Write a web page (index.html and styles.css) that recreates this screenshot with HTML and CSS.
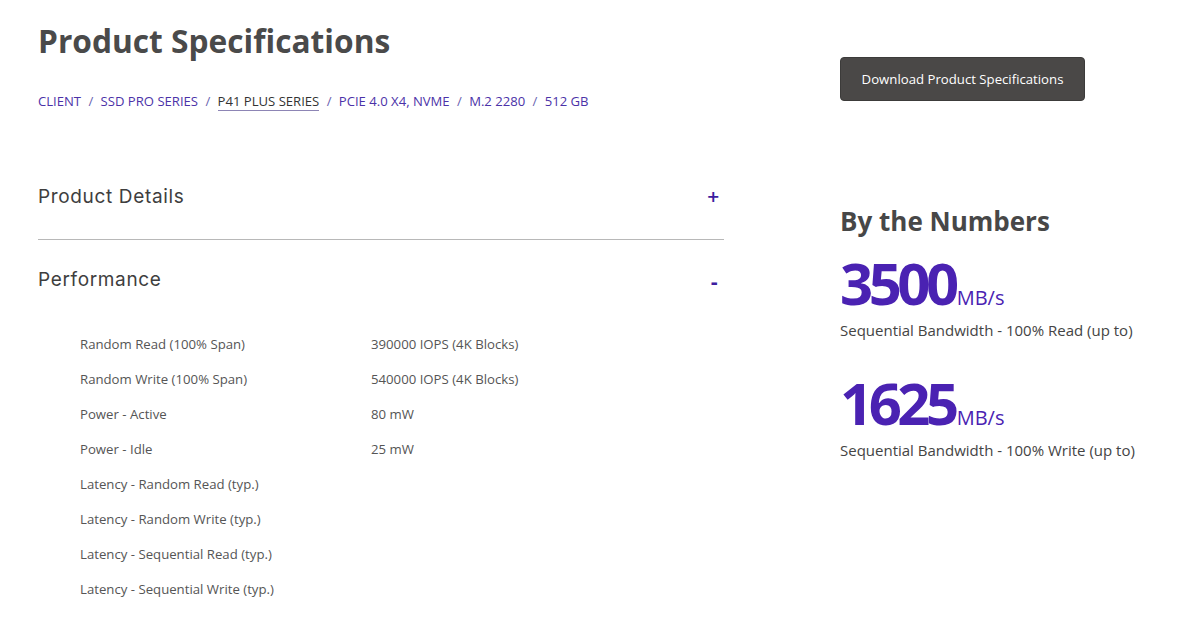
FILE: index.html
```html
<!DOCTYPE html>
<html lang="en">
<head>
<meta charset="utf-8">
<title>Product Specifications</title>
<link rel="stylesheet" href="styles.css">
</head>
<body>
<div class="page">
  <main class="main">
    <h1 class="title">Product Specifications</h1>
    <nav class="crumbs">
      <a class="crumb">CLIENT</a><span class="sep">/</span><a class="crumb">SSD PRO SERIES</a><span class="sep">/</span><a class="crumb active">P41 PLUS SERIES</a><span class="sep">/</span><a class="crumb">PCIE 4.0 X4, NVME</a><span class="sep">/</span><a class="crumb">M.2 2280</a><span class="sep">/</span><a class="crumb">512 GB</a>
    </nav>
    <section class="accordion">
      <div class="acc-item closed">
        <div class="acc-head"><span class="acc-title">Product Details</span><span class="acc-icon">+</span></div>
      </div>
      <div class="acc-item open">
        <div class="acc-head"><span class="acc-title">Performance</span><span class="acc-icon minus">-</span></div>
        <div class="spec-list">
          <div class="spec-row"><span class="spec-label">Random Read (100% Span)</span><span class="spec-value">390000 IOPS (4K Blocks)</span></div>
          <div class="spec-row"><span class="spec-label">Random Write (100% Span)</span><span class="spec-value">540000 IOPS (4K Blocks)</span></div>
          <div class="spec-row"><span class="spec-label">Power - Active</span><span class="spec-value">80 mW</span></div>
          <div class="spec-row"><span class="spec-label">Power - Idle</span><span class="spec-value">25 mW</span></div>
          <div class="spec-row"><span class="spec-label">Latency - Random Read (typ.)</span><span class="spec-value"></span></div>
          <div class="spec-row"><span class="spec-label">Latency - Random Write (typ.)</span><span class="spec-value"></span></div>
          <div class="spec-row"><span class="spec-label">Latency - Sequential Read (typ.)</span><span class="spec-value"></span></div>
          <div class="spec-row"><span class="spec-label">Latency - Sequential Write (typ.)</span><span class="spec-value"></span></div>
        </div>
      </div>
    </section>
  </main>
  <aside class="side">
    <button class="download">Download Product Specifications</button>
    <h2 class="numbers-title">By the Numbers</h2>
    <div class="stat">
      <div class="stat-line"><span class="stat-num">3500</span><span class="stat-unit">MB/s</span></div>
      <div class="stat-caption">Sequential Bandwidth - 100% Read (up to)</div>
    </div>
    <div class="stat second">
      <div class="stat-line"><span class="stat-num">1625</span><span class="stat-unit">MB/s</span></div>
      <div class="stat-caption">Sequential Bandwidth - 100% Write (up to)</div>
    </div>
  </aside>
</div>
</body>
</html>
```
FILE: styles.css
```css
* { box-sizing: border-box; }
html, body { margin: 0; padding: 0; background: #fff; }
body { font-family: "Open Sans", "Liberation Sans", sans-serif; color: #444; }

.page {
  display: flex;
  gap: 116px;
  padding: 21px 0 0 38px;
}
.main { width: 686px; flex: none; }
.side { padding-top: 36px; width: 320px; flex: none; }

.title {
  margin: 0;
  font-size: 31.7px;
  line-height: 40px;
  font-weight: 700;
  color: #4a4a4a;
}

.crumbs {
  margin-top: 31px;
  font-size: 13.1px;
  line-height: 18px;
  color: #4b32a8;
}
.crumb { color: #4b32a8; text-decoration: none; }
.crumb.active { color: #333; border-bottom: 1px solid #8d85b5; }
.sep { margin: 0 7.35px; color: #6a5fb0; }

.accordion { margin-top: 45px; }
.acc-head {
  display: flex;
  justify-content: space-between;
  align-items: center;
  padding: 30px 4px 30px 0;
  line-height: 24px;
}
.closed { border-bottom: 1px solid #b8b8b8; }
.open .acc-head { padding-top: 28px; padding-bottom: 30px; }
.acc-title {
  font-family: "Inter", "Lato", sans-serif;
  font-size: 19px;
  letter-spacing: 0.65px;
  color: #3e3e3e;
}
.acc-icon {
  font-family: "DejaVu Sans", sans-serif;
  font-weight: 700;
  font-size: 16px;
  color: #3d1ea0;
}
.acc-icon.minus {
  font-size: 18px;
  line-height: 18px;
  margin-top: 6px;
  padding-right: 2px;
}

.spec-list { padding: 4px 0 0 42px; }
.spec-row {
  display: grid;
  grid-template-columns: 291px auto;
  height: 35px;
  align-items: center;
  font-size: 13.2px;
  color: #555;
}

.download {
  display: block;
  width: 245px;
  height: 44px;
  background: #4a4847;
  border: 1px solid #3c3b3a;
  border-radius: 4px;
  color: #fff;
  font-family: "Open Sans", "Liberation Sans", sans-serif;
  font-size: 13.2px;
  cursor: pointer;
}

.numbers-title {
  margin: 103px 0 0;
  font-size: 26px;
  line-height: 34px;
  font-weight: 700;
  color: #474747;
}

.stat { margin-top: 16px; }
.stat.second { margin-top: 34px; }
.stat-line {
  font-size: 58px;
  line-height: 58px;
  height: 58px;
  white-space: nowrap;
}
.stat-num {
  font-weight: 700;
  letter-spacing: -4.5px;
  color: #4a22b2;
}
.stat-unit {
  font-size: 20px;
  line-height: 1;
  color: #4a22b2;
  margin-left: 2px;
}
.stat-caption {
  margin-top: 8px;
  font-size: 15px;
  line-height: 20px;
  color: #444;
}
```
